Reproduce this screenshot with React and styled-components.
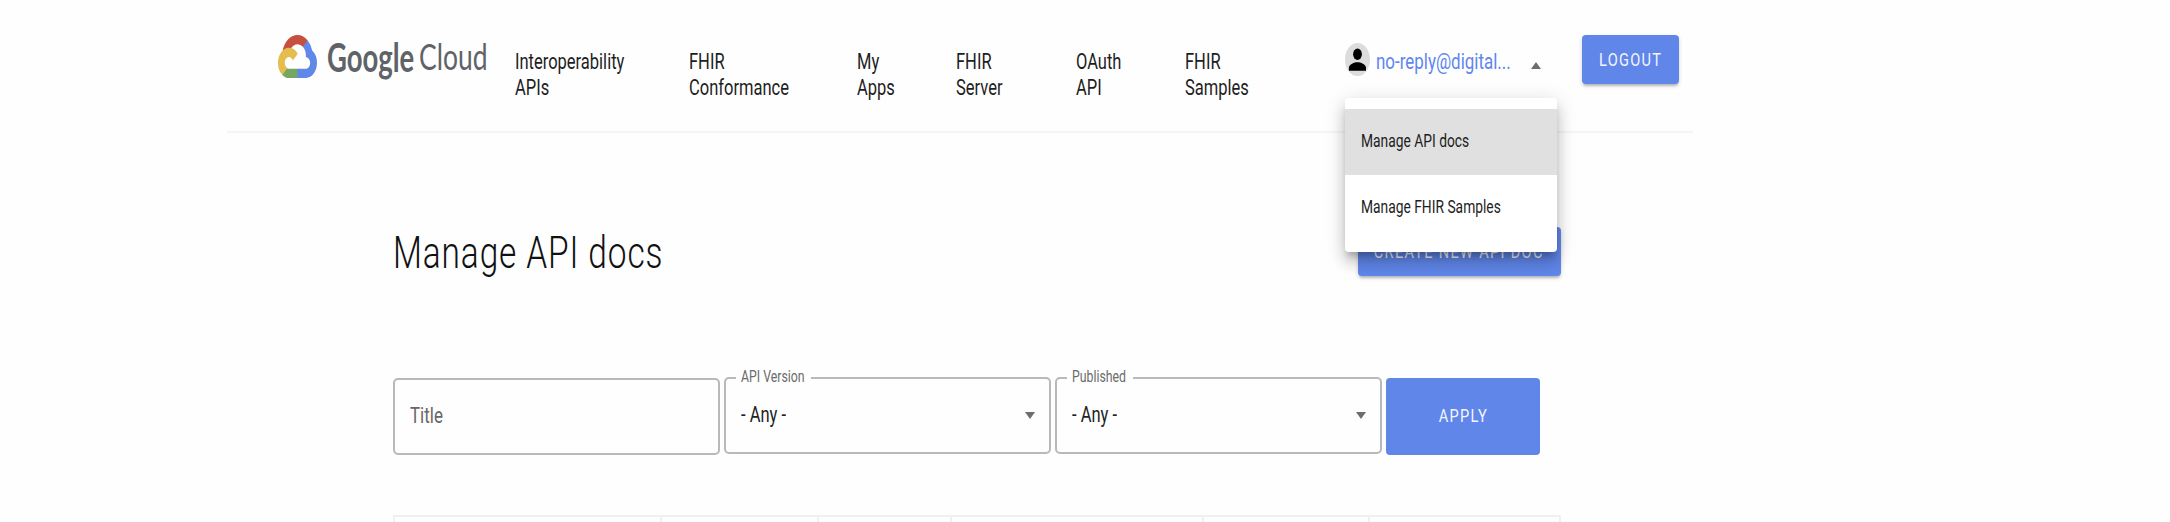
import React from "react";
import styled, { createGlobalStyle } from "styled-components";

const GlobalStyle = createGlobalStyle`
  * { box-sizing: border-box; }
  body {
    margin: 0;
    overflow: hidden;
    background: #fefefe;
    color: #1d1d1d;
    font-family: Roboto, "Liberation Sans", sans-serif;
    font-size: 22px;
  }
`;

/* Horizontally condensed run of text */
const Condensed = styled.span`
  display: inline-block;
  white-space: nowrap;
  transform: scaleX(${(p) => p.$x || 0.75});
  transform-origin: ${(p) => p.$origin || "left"} center;
`;

const Page = styled.div`
  height: 522px;
  overflow: hidden;
`;

const Header = styled.header`
  display: flex;
  align-items: flex-start;
  width: 1466px;
  height: 133px;
  margin-left: 227px;
  padding-left: 51px;
  border-bottom: 2px solid #f5f5f5;
`;

const Brand = styled.a`
  display: flex;
  width: 236.5px;
  padding-top: 35px;
  color: #5f6368;
`;

const BrandMark = styled.svg`
  width: 39px;
  height: 43px;
  margin-right: 10px;
`;

const BrandWord = styled.span`
  width: ${(p) => p.$width}px;
  font-family: Lato, sans-serif;
  font-size: ${(p) => p.$size}px;
  font-weight: ${(p) => p.$weight};
  line-height: 43px;
`;

const Nav = styled.nav`
  display: flex;
  padding-top: 49px;
`;

const NavLink = styled.a`
  display: flex;
  flex-direction: column;
  width: ${(p) => p.$width}px;
  line-height: 26.3px;
`;

const Account = styled.div`
  position: relative;
  display: flex;
  width: 237.5px;
  padding-top: 43px;
`;

const Avatar = styled.svg`
  width: 25px;
  height: 33px;
  margin-right: 6px;
`;

const Email = styled.span`
  width: 155px;
  padding-top: 6px;
  line-height: 26px;
  color: #5f86ee;
`;

const Caret = styled.span`
  width: 0;
  height: 0;
  margin-top: ${(p) => p.$top || 0}px;
  margin-right: ${(p) => p.$right || 0}px;
  border: solid transparent;
  border-width: 0 5px;
  ${(p) => (p.$up ? "border-bottom: 7px solid #6d6d6d;" : "border-top: 7px solid #6d6d6d;")}
`;

const Menu = styled.div`
  position: absolute;
  z-index: 2;
  top: 98px;
  left: 0;
  width: 212.5px;
  height: 153.5px;
  padding-top: 11px;
  border-radius: 4px;
  background: #fff;
  box-shadow: 0 7px 6px -3px rgba(0, 0, 0, 0.2), 0 11px 14px 1px rgba(0, 0, 0, 0.14),
    0 4px 19px 2px rgba(0, 0, 0, 0.12);
`;

const MenuItem = styled.div`
  height: 65.8px;
  padding-left: 16.5px;
  background: ${(p) => (p.$selected ? "#e0e0e0" : "transparent")};
  font-size: 19.2px;
  line-height: 64px;
`;

const Button = styled.button`
  display: flex;
  align-items: center;
  justify-content: center;
  width: ${(p) => p.$width}px;
  height: ${(p) => p.$height || 49}px;
  margin-top: ${(p) => p.$top || 0}px;
  padding: 0 0 ${(p) => p.$lift || 0}px;
  border: 0;
  border-radius: 4px;
  background: #6086e9;
  box-shadow: ${(p) => (p.$flat ? "none" : "0 3px 2px -1px rgba(0,0,0,.16), 0 2px 4px rgba(0,0,0,.16)")};
  color: #f4f6fd;
  font-family: inherit;
  font-size: 19.2px;
  letter-spacing: 1.7px;
`;

const Content = styled.main`
  width: 1167.5px;
  margin-left: 393px;
`;

const TitleRow = styled.div`
  display: flex;
  justify-content: space-between;
  height: 243.5px;
  padding-top: 94px;
`;

const Heading = styled.h1`
  width: 300px;
  margin: 0;
  font-size: 44px;
  font-weight: 300;
  line-height: 52px;
  letter-spacing: 1.15px;
  color: #111;
`;

const Filters = styled.form`
  display: flex;
  gap: 4.5px;
  height: 138px;
`;

const Field = styled.fieldset`
  display: flex;
  justify-content: space-between;
  width: 326.5px;
  height: 77px;
  min-width: 0;
  margin: ${(p) => p.$top || 0}px 0 0;
  padding: 0 14.5px;
  border: 2px solid #b9b9b9;
  border-radius: 5px;
  color: ${(p) => p.$color || "#222"};
  line-height: 71.5px;
`;

const SelectField = styled(Field)`
  position: relative;
`;

const FieldLabel = styled.span`
  position: absolute;
  top: -12px;
  left: 10px;
  width: ${(p) => p.$width}px;
  height: 20px;
  padding-left: 4.5px;
  background: #fefefe;
  font-size: 16.4px;
  line-height: 20px;
  color: #6b6b6b;
`;

const Table = styled.div`
  display: grid;
  grid-template-columns: 267px 157px 133px 252px 166px 1fr;
  height: 20px;
  border: 2px solid #f0f0f0;
  border-right: 0;
`;

const Cell = styled.div`
  border-right: 2px solid #f0f0f0;
`;

const navItems = [
  { lines: ["Interoperability", "APIs"], width: 174.5 },
  { lines: ["FHIR", "Conformance"], width: 167.5 },
  { lines: ["My", "Apps"], width: 99 },
  { lines: ["FHIR", "Server"], width: 120 },
  { lines: ["OAuth", "API"], width: 109 },
  { lines: ["FHIR", "Samples"], width: 160 },
];

function CloudLogo() {
  return (
    <BrandMark viewBox="0 0 256 206" preserveAspectRatio="none" aria-hidden="true">
      <path fill="#c5503e" d="M170.252 56.819l22.253-22.253 1.483-9.37C153.437-11.677 88.976-7.496 52.42 33.92 42.267 45.423 34.734 59.764 30.717 74.573l7.97-1.123 44.505-7.34 3.436-3.513c19.797-21.742 53.27-24.667 76.128-6.168l7.496.39z" />
      <path fill="#6087ea" d="M224.205 73.918a100.249 100.249 0 0 0-30.217-48.722l-31.232 31.232a55.515 55.515 0 0 1 20.379 44.037v5.544c15.35 0 27.797 12.445 27.797 27.796 0 15.352-12.446 27.573-27.797 27.573h-55.671l-5.466 5.934v33.34l5.466 5.231h55.67c39.93.311 72.553-31.494 72.864-71.424a72.303 72.303 0 0 0-31.793-60.541" />
      <path fill="#75a663" d="M71.87 205.796h55.593V161.29H71.87a27.275 27.275 0 0 1-11.4-2.498l-7.887 2.42-22.409 22.253-1.952 7.574c12.567 9.489 27.9 14.825 43.647 14.757" />
      <path fill="#e5bd4f" d="M71.87 61.425C31.94 61.663-.237 94.228.001 134.159a72.301 72.301 0 0 0 28.222 56.88l32.248-32.246c-13.99-6.322-20.208-22.786-13.887-36.776 6.32-13.99 22.786-20.208 36.775-13.888a27.796 27.796 0 0 1 13.887 13.888l32.248-32.248A72.224 72.224 0 0 0 71.87 61.425" />
    </BrandMark>
  );
}

function AccountIcon() {
  return (
    <Avatar viewBox="0 0 25 33" aria-hidden="true">
      <ellipse cx="12.5" cy="16.5" rx="12.5" ry="16.5" fill="#dcdcdc" />
      <ellipse cx="12.5" cy="11.2" rx="4.4" ry="5.7" fill="#000" />
      <path fill="#000" d="M3.9 27.8v-3c0-3.6 5.6-5.6 8.6-5.6s8.5 2 8.5 5.6v3z" />
    </Avatar>
  );
}

function Select({ label, labelWidth }) {
  return (
    <SelectField>
      <FieldLabel $width={labelWidth}><Condensed>{label}</Condensed></FieldLabel>
      <Condensed>- Any -</Condensed>
      <Caret $top={33.5} $right={-1} />
    </SelectField>
  );
}

export default function App() {
  return (
    <Page>
      <GlobalStyle />
      <Header>
        <Brand>
          <CloudLogo />
          <BrandWord $width={91.5} $size={39.5} $weight={700}><Condensed $x={0.695}>Google</Condensed></BrandWord>
          <BrandWord $width={90} $size={36.5} $weight={400}><Condensed $x={0.725}>Cloud</Condensed></BrandWord>
        </Brand>
        <Nav>
          {navItems.map((item) => (
            <NavLink key={item.lines.join()} $width={item.width}>
              {item.lines.map((line) => <Condensed key={line}>{line}</Condensed>)}
            </NavLink>
          ))}
        </Nav>
        <Account>
          <AccountIcon />
          <Email><Condensed $x={0.77}>no-reply@digital...</Condensed></Email>
          <Caret $up $top={19} />
          <Menu>
            <MenuItem $selected><Condensed $x={0.72}>Manage API docs</Condensed></MenuItem>
            <MenuItem><Condensed $x={0.72}>Manage FHIR Samples</Condensed></MenuItem>
          </Menu>
        </Account>
        <Button $width={97} $top={35}><Condensed $x={0.76} $origin="center">LOGOUT</Condensed></Button>
      </Header>
      <Content>
        <TitleRow>
          <Heading><Condensed $x={0.76}>Manage API docs</Condensed></Heading>
          <Button $width={203}><Condensed $x={0.76} $origin="center">CREATE NEW API DOC</Condensed></Button>
        </TitleRow>
        <Filters>
          <Field as="div" $top={1} $color="#666"><Condensed $x={0.77}>Title</Condensed></Field>
          <Select label="API Version" labelWidth={75} />
          <Select label="Published" labelWidth={66} />
          <Button as="div" $width={154} $height={77} $top={1} $lift={2} $flat>
            <Condensed $x={0.76} $origin="center">APPLY</Condensed>
          </Button>
        </Filters>
        <Table>
          <Cell /><Cell /><Cell /><Cell /><Cell /><Cell />
        </Table>
      </Content>
    </Page>
  );
}
